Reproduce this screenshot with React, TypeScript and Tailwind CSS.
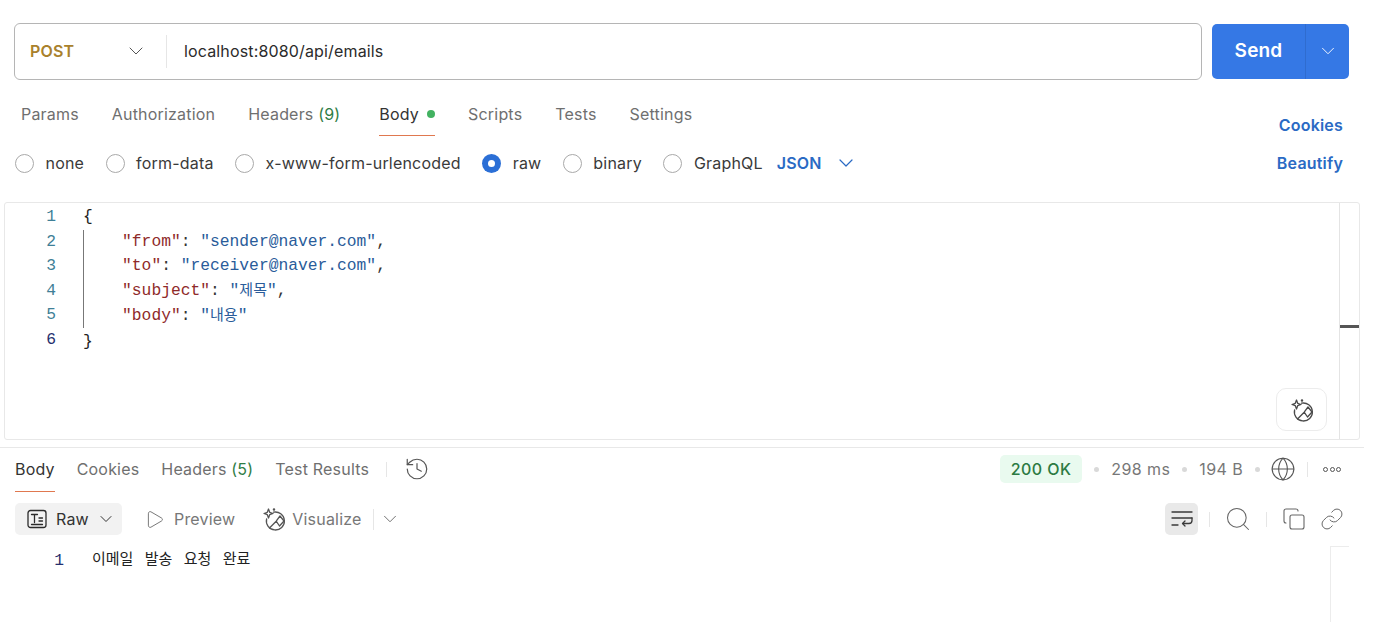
import React from "react";
import { ChevronDown, Copy, Globe, History, Link, Play, Search } from "lucide-react";

const mono = "font-['Liberation_Mono','Noto_Sans_CJK_KR',monospace]";

function BeautifyIcon({ size = 24, className = "" }: { size?: number; className?: string }) {
  return (
    <svg width={size} height={size} viewBox="0 0 24 24" fill="none" stroke="currentColor" strokeWidth="1.3" strokeLinecap="round" strokeLinejoin="round" className={className}>
      <path d="M11.5 5.2A9 9 0 1 1 4.6 12" />
      <path d="M7.5 21 14.2 14.2 18 9l4 5-4.5 5-3.3-4.8" />
      <path d="M6.5 2 7.7 5.3 11 6.5 7.7 7.7 6.5 11 5.3 7.7 2 6.5 5.3 5.3Z" />
      <circle cx="12" cy="2.4" r="0.6" />
    </svg>
  );
}

function RawIcon() {
  return (
    <svg width="20" height="20" viewBox="0 0 20 20" fill="none" stroke="#2b2b2b" strokeWidth="1.3" strokeLinecap="round">
      <rect x="1" y="1.5" width="18" height="17" rx="2.5" />
      <path d="M4.5 5.5h6M7.5 5.5v8M4.5 15.5h11M12 9h3.5M12 12h3.5" />
    </svg>
  );
}

function WrapIcon() {
  return (
    <svg width="22" height="18" viewBox="0 0 22 18" fill="none" stroke="#3a3a3a" strokeWidth="1.3" strokeLinecap="round" strokeLinejoin="round">
      <path d="M1 2h20M1 8h20M1 15h6" />
      <path d="M21 8v2.5a3 3 0 0 1-3 3h-6" />
      <path d="M14 11l-2.5 2.5L14 16" />
    </svg>
  );
}

function Radio({ label, on = false }: { label: string; on?: boolean }) {
  return (
    <div className="flex items-center gap-[11.5px]">
      {on ? (
        <span className="w-[19px] h-[19px] rounded-full bg-[#2b6fd6] flex items-center justify-center">
          <span className="w-[7px] h-[7px] rounded-full bg-white" />
        </span>
      ) : (
        <span className="w-[19px] h-[19px] rounded-full border border-[#a9a9a9] bg-white" />
      )}
      <span className="text-[#3a3a3a]">{label}</span>
    </div>
  );
}

function Sep({ className = "" }: { className?: string }) {
  return <span className={`w-px bg-[#e6e6e6] ${className}`} />;
}

function Dot() {
  return <span className="w-[5px] h-[5px] rounded-full bg-[#d9d9d9]" />;
}

function Ko({ children }: { children: React.ReactNode }) {
  return <span className="text-[15px]">{children}</span>;
}

const codeLines: React.ReactNode[] = [
  <span className="text-[#222]">{"{"}</span>,
  <><span className="text-[#8f2a2a]">{'    "from"'}</span>: <span className="text-[#2a5c9a]">"sender@naver.com"</span>,</>,
  <><span className="text-[#8f2a2a]">{'    "to"'}</span>: <span className="text-[#2a5c9a]">"receiver@naver.com"</span>,</>,
  <><span className="text-[#8f2a2a]">{'    "subject"'}</span>: <span className="text-[#2a5c9a]">"<Ko>제목</Ko>"</span>,</>,
  <><span className="text-[#8f2a2a]">{'    "body"'}</span>: <span className="text-[#2a5c9a]">"<Ko>내용</Ko>"</span></>,
  <span className="text-[#222]">{"}"}</span>,
];

export default function App() {
  return (
    <div className="w-[1378px] h-[622px] overflow-hidden bg-white flex flex-col font-['Inter','Noto_Sans_CJK_KR',sans-serif] text-[16px] tracking-[0.19px] text-[#3a3a3a]">
      {/* request bar */}
      <div className="flex items-center gap-[10px] pl-[14px] pr-[29px] pt-[23px]">
        <div className="flex-1 h-[57px] flex items-center border-[1.5px] border-[#b5b5b5] rounded-[6px]">
          <div className="w-[151px] pl-[15px] pr-[18px] pb-[2px] h-full flex items-center justify-between">
            <span className="font-semibold text-[#a9812c]">POST</span>
            <ChevronDown size={24} strokeWidth={1} className="text-[#555] mt-[1px]" />
          </div>
          <Sep className="h-[33px]" />
          <span className="pl-[17px] pb-[2px] text-[#2b2b2b] tracking-[0.15px]">localhost:8080/api/emails</span>
        </div>
        <div className="w-[137px] h-[55px] flex bg-[#3578e5] rounded-[5px] text-white">
          <div className="w-[93px] flex items-center justify-center font-semibold text-[19px]">Send</div>
          <div className="flex-1 pb-[1px] flex items-center justify-center border-l border-[#2f6ccf]">
            <ChevronDown size={22} strokeWidth={1} />
          </div>
        </div>
      </div>

      {/* request tabs */}
      <div className="flex items-start justify-between pl-[21px] pr-[35px] pt-[22px] h-[69px] text-[#6f6f6f]">
        <div className="flex gap-[33px]">
          <span>Params</span>
          <span>Authorization</span>
          <span>Headers <span className="text-[#2f7d46]">(9)</span></span>
          <div className="flex flex-col ml-[6px]">
            <div className="flex items-center gap-[8px] text-[#333] pb-[9px] border-b border-[#e0784f] -mb-px">
              Body <span className="w-2 h-2 rounded-full bg-[#42b261]" />
            </div>
          </div>
          <span>Scripts</span>
          <span>Tests</span>
          <span>Settings</span>
        </div>
        <span className="font-semibold text-[#2a6ac4] pt-[11px]">Cookies</span>
      </div>

      {/* body type */}
      <div className="flex items-center justify-between pl-[15px] pr-[35px] h-[20px] mt-[4px]">
        <div className="flex items-center gap-[21.5px]">
          <Radio label="none" />
          <Radio label="form-data" />
          <Radio label="x-www-form-urlencoded" />
          <Radio label="raw" on />
          <Radio label="binary" />
          <div className="flex items-center gap-[14px]">
            <Radio label="GraphQL" />
            <span className="flex items-center gap-[12px] font-semibold text-[#2a6ac4]">
              JSON <ChevronDown size={24} strokeWidth={1.2} />
            </span>
          </div>
        </div>
        <span className="font-semibold text-[#2a6ac4]">Beautify</span>
      </div>

      {/* editor */}
      <div className="ml-[4px] mr-[18px] mt-[29px] h-[238px] flex border border-[#e8e8e8] rounded-[3px] tracking-normal">
        <div className="flex-1 relative flex pt-[2px]">
          <div className={`w-[51px] text-right text-[#3f7f97] ${mono} text-[16.3px] leading-[24.6px]`}>
            {[1, 2, 3, 4, 5, 6].map((n) => (
              <div key={n} className={n === 6 ? "text-[#26306e]" : ""}>{n}</div>
            ))}
          </div>
          <div className={`relative pl-[27px] ${mono} text-[16.3px] leading-[24.6px] text-[#333] whitespace-pre`}>
            <span className="absolute left-[27px] top-[25px] h-[98px] w-px bg-[#777]" />
            {codeLines.map((line, i) => (
              <div key={i}>{line}</div>
            ))}
          </div>
          <div className="absolute right-[12px] bottom-[8px] w-[51px] h-[43px] border border-[#ececec] rounded-[10px] flex items-center justify-center text-[#4a4a4a]">
            <BeautifyIcon size={24} />
          </div>
        </div>
        <div className="w-[20px] border-l border-[#e4e4e4] pt-[122px]">
          <div className="h-[3px] bg-[#555]" />
        </div>
      </div>

      {/* response */}
      <div className="mt-[7px] mr-[14px] border-t border-[#e8e8e8] flex items-start justify-between pl-[15px] pr-[23px] h-[44px]">
        <div className="flex items-start gap-[22px] pt-[9px] text-[#6f6f6f]">
          <span className="text-[#333] pb-[10px] border-b border-[#e0784f]">Body</span>
          <span>Cookies</span>
          <span>Headers <span className="text-[#2f7d46]">(5)</span></span>
          <div className="flex items-center gap-[17px]">
            <span>Test Results</span>
            <Sep className="h-[15px]" />
            <History size={26} strokeWidth={1.1} className="text-[#555] -my-[2px]" />
          </div>
        </div>
        <div className="flex items-center gap-[12px] pt-[7px] text-[#777] tracking-[0.4px]">
          <span className="h-[28px] px-[11px] flex items-center rounded-[5px] bg-[#e9faef] text-[#2c7a43] font-[450]">200 OK</span>
          <Dot />
          <span>298 ms</span>
          <Dot />
          <span>194 B</span>
          <Dot />
          <Globe size={26} strokeWidth={1} className="text-[#555] -mx-[2px]" />
          <Sep className="h-[15px] mx-[1px]" />
          <span className="flex gap-[1.5px] ml-[2px]">
            <span className="w-[5px] h-[5px] rounded-full border border-[#555]" />
            <span className="w-[5px] h-[5px] rounded-full border border-[#555]" />
            <span className="w-[5px] h-[5px] rounded-full border border-[#555]" />
          </span>
        </div>
      </div>

      {/* response toolbar */}
      <div className="flex items-center justify-between pl-[15px] pr-[34px] h-[32px] mt-[12px] text-[#777]">
        <div className="flex items-center">
          <div className="w-[107px] h-[32px] rounded-[5px] bg-[#f2f2f2] flex items-center gap-[9px] pl-[12px] text-[#333]">
            <RawIcon />
            <span>Raw</span>
            <ChevronDown size={20} strokeWidth={1.2} className="-ml-[2px]" />
          </div>
          <Play size={21} strokeWidth={1} className="ml-[22px] text-[#666]" />
          <span className="ml-[9px]">Preview</span>
          <BeautifyIcon size={24} className="ml-[27px] text-[#555]" />
          <span className="ml-[6px]">Visualize</span>
          <Sep className="h-[21px] ml-[11px]" />
          <ChevronDown size={22} strokeWidth={1} className="ml-[5px] text-[#666]" />
        </div>
        <div className="flex items-center text-[#666]">
          <span className="w-[33px] h-[32px] rounded-[5px] bg-[#e9e9e9] flex items-center justify-center">
            <WrapIcon />
          </span>
          <Sep className="h-[15px] ml-[11px]" />
          <Search size={28} strokeWidth={0.9} className="ml-[14px]" />
          <Sep className="h-[15px] ml-[14px]" />
          <Copy size={24} strokeWidth={1.1} className="ml-[15px]" />
          <Link size={24} strokeWidth={1} className="ml-[14px]" />
        </div>
      </div>

      {/* response body */}
      <div className="flex-1 flex mt-[11px] mr-[29px]">
        <div className="flex-1 flex pt-[3px] tracking-normal">
          <div className={`w-[64px] text-right text-[#26306e] ${mono} text-[16.3px] leading-[24px]`}>1</div>
          <div className={`pl-[28px] ${mono} text-[15px] leading-[24px] text-[#222] [word-spacing:2.4px]`}>이메일 발송 요청 완료</div>
        </div>
        <div className="w-[19px] border-l border-t border-[#ececec]" />
      </div>
    </div>
  );
}
